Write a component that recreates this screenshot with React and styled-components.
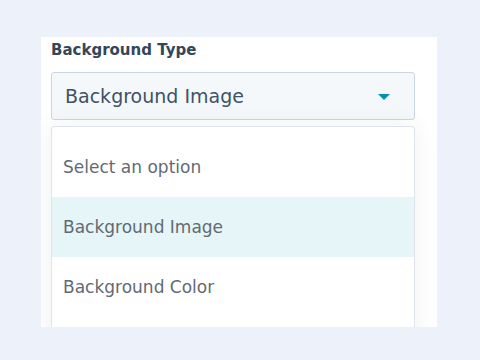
import React from "react";
import styled, { createGlobalStyle } from "styled-components";

const Global = createGlobalStyle`
  html, body { margin: 0; padding: 0; background: #edf1f9; }
  body { width: 480px; height: 360px; overflow: hidden; font-family: "DejaVu Sans", "Noto Sans", sans-serif; }
`;

const Page = styled.div`
  padding: 37px 43px 0 41px;
`;

const Panel = styled.div`
  background: #ffffff;
  height: 290px;
  overflow: hidden;
  padding: 4px 22px 0 10px;
  box-sizing: border-box;
  display: flex;
  flex-direction: column;
`;

const Label = styled.div`
  flex-shrink: 0;
  font-size: 15px;
  font-weight: 700;
  color: #33475b;
  line-height: 18px;
  margin-bottom: 13px;
`;

const Select = styled.div`
  flex-shrink: 0;
  height: 48px;
  box-sizing: border-box;
  background: #f5f8fa;
  border: 1px solid #cbd6e2;
  border-radius: 3px;
  display: flex;
  align-items: center;
  justify-content: space-between;
  padding: 0 24px 0 13px;
  font-size: 19px;
  color: #3f5266;
`;

const Caret = styled.svg`
  width: 12px;
  height: 6px;
  display: block;
  margin-top: 1px;
`;

const Menu = styled.div`
  flex-shrink: 0;
  margin-top: 6px;
  background: #ffffff;
  border: 1px solid #dfe3eb;
  border-radius: 3px;
  box-shadow: 0 1px 24px rgba(45, 62, 80, 0.08);
  padding-top: 10px;
  display: flex;
  flex-direction: column;
`;

const Option = styled.div`
  flex-shrink: 0;
  height: 60px;
  display: flex;
  align-items: center;
  padding-left: 11px;
  font-size: 17px;
  color: #626a73;
  background: ${(p) => (p.$active ? "#e5f5f8" : "#ffffff")};
`;

export default function App() {
  return (
    <>
      <Global />
      <Page>
        <Panel>
          <Label>Background Type</Label>
          <Select>
            <span>Background Image</span>
            <Caret viewBox="0 0 12 6">
              <path d="M0 0 H12 L6 6 Z" fill="#0091ae" />
            </Caret>
          </Select>
          <Menu>
            <Option>Select an option</Option>
            <Option $active>Background Image</Option>
            <Option>Background Color</Option>
            <Option />
          </Menu>
        </Panel>
      </Page>
    </>
  );
}
